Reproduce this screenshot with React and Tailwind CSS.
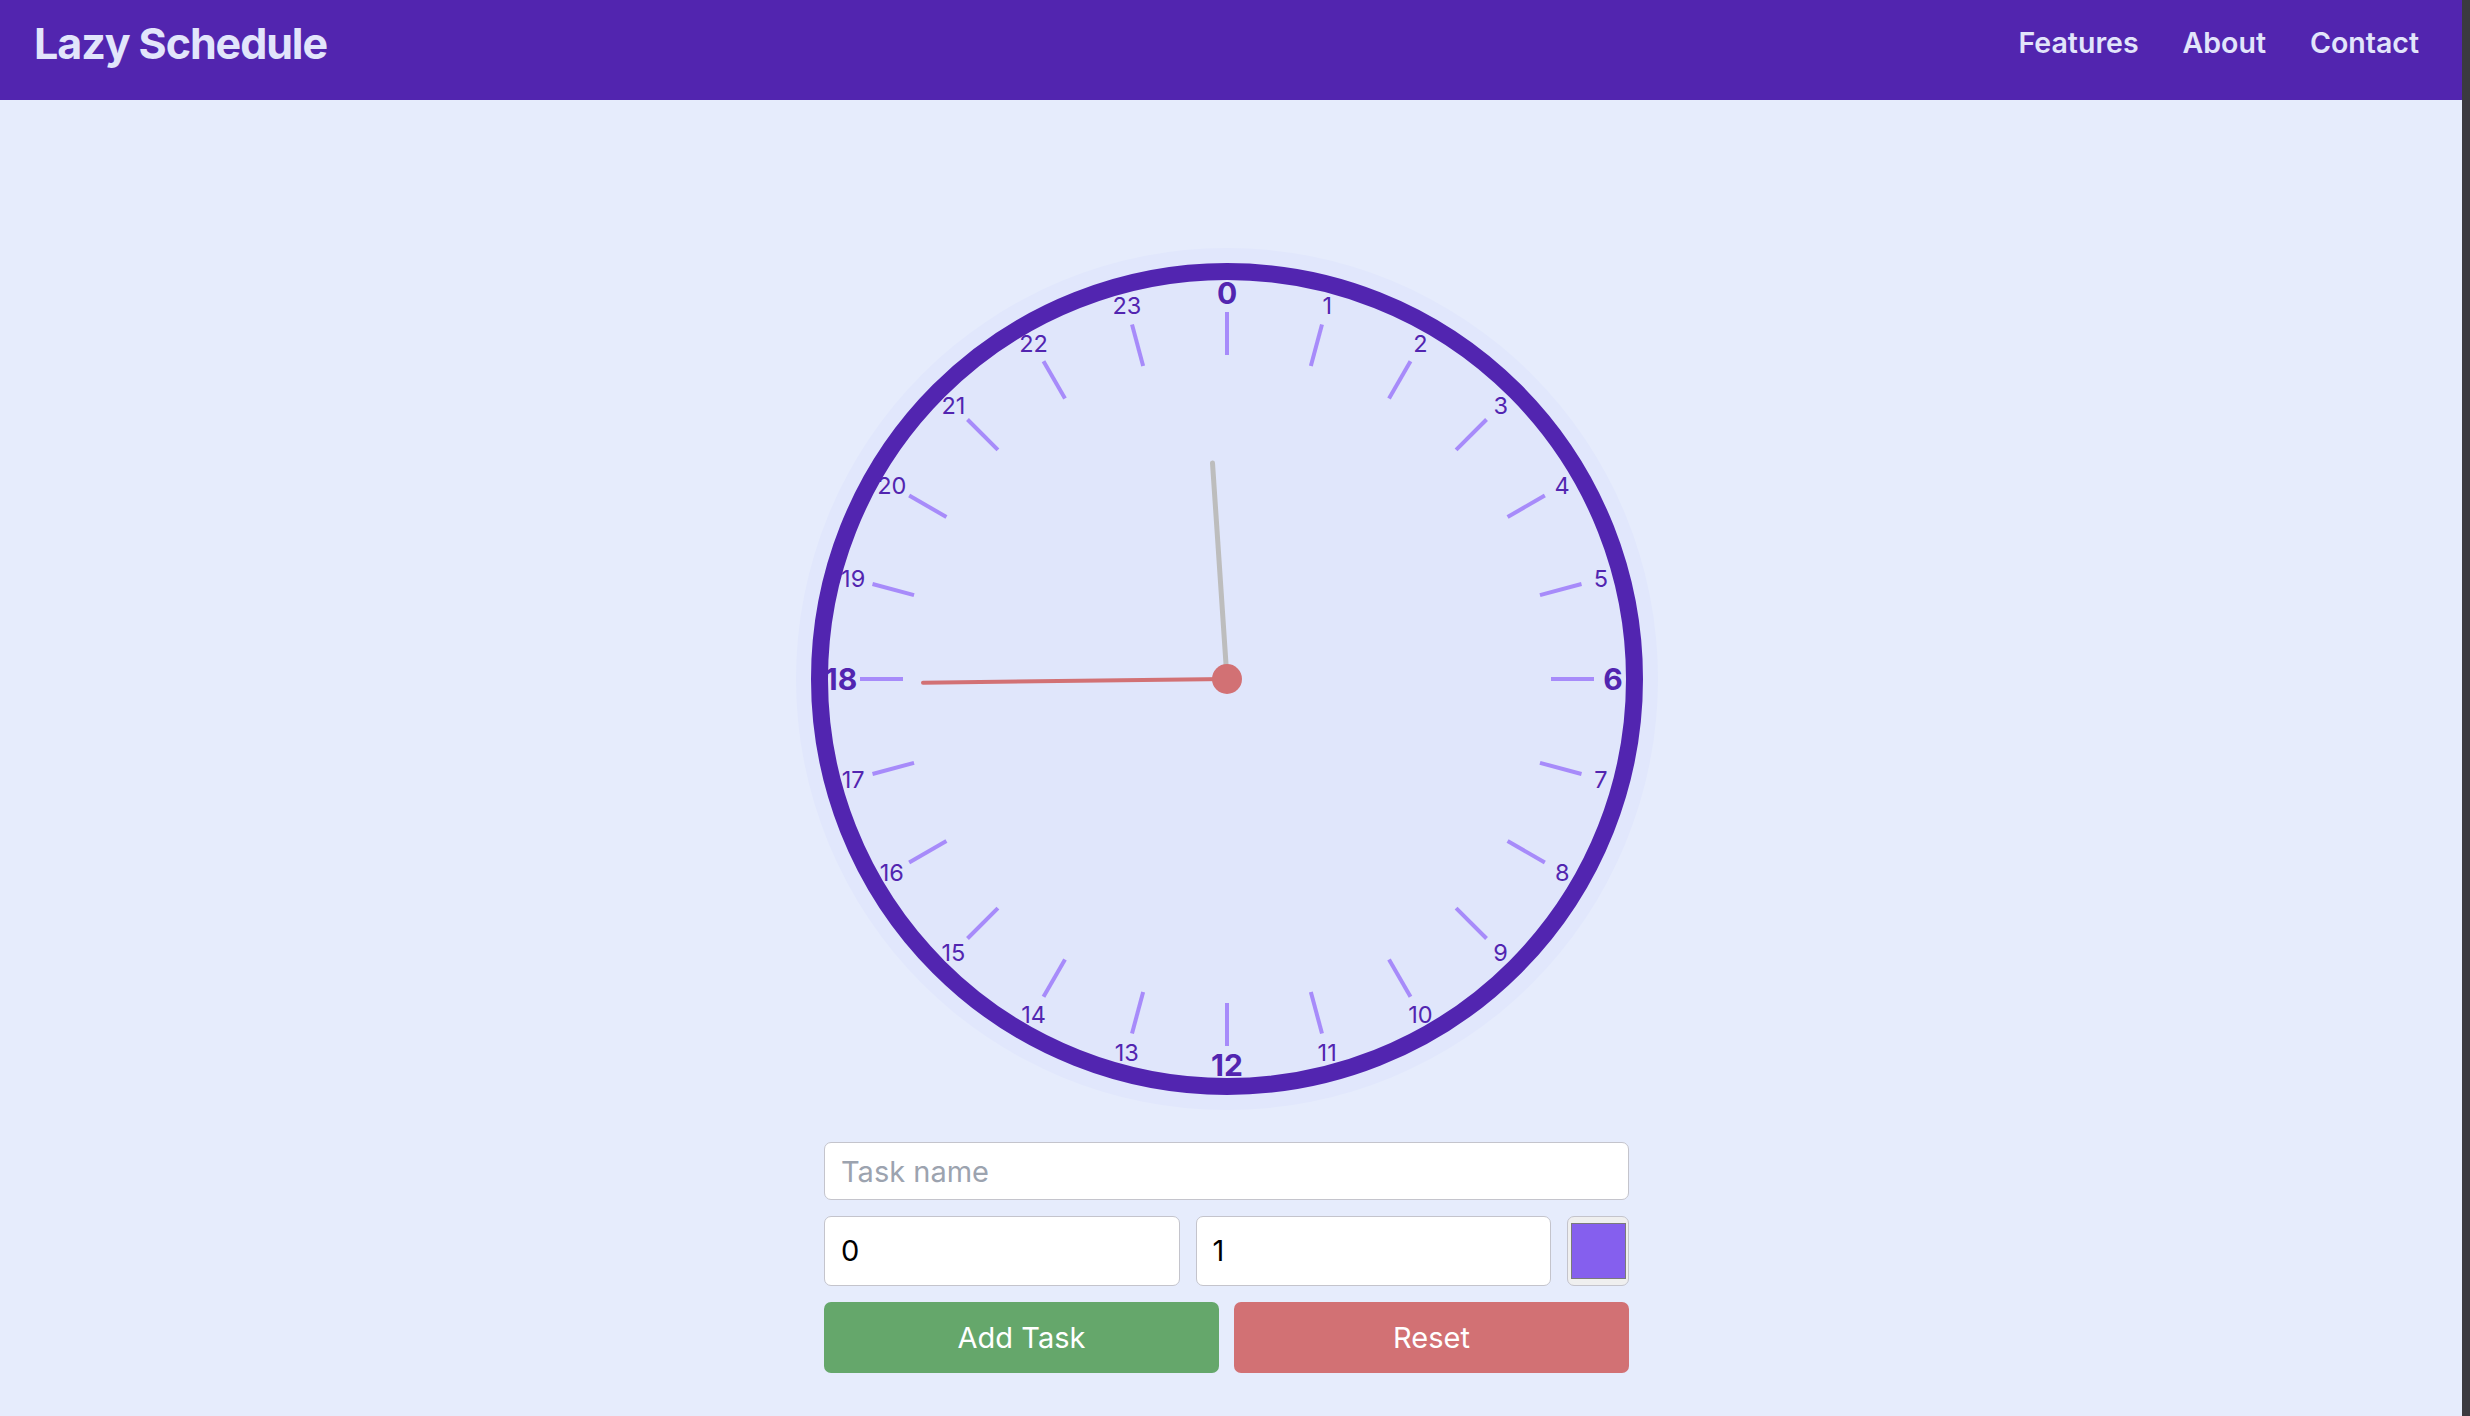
import React, { useState } from 'react'

const C = 440
const hours = Array.from({ length: 24 }, (_, i) => i)

const polar = (deg, r) => {
  const a = (deg * Math.PI) / 180
  return [C + r * Math.sin(a), C - r * Math.cos(a)]
}

const Clock = () => (
  <svg width="880" height="880" viewBox="0 0 880 880" className="block">
    <circle cx={C} cy={C} r="431" fill="#e1e7fc" />
    <circle cx={C} cy={C} r="407.5" fill="#e0e6fb" stroke="#5225b0" strokeWidth="17" />
    {hours.map(h => {
      const [x1, y1] = polar(h * 15, 324)
      const [x2, y2] = polar(h * 15, 367)
      return (
        <line
          key={`t${h}`}
          x1={x1}
          y1={y1}
          x2={x2}
          y2={y2}
          stroke="#a78bfa"
          strokeWidth="4"
        />
      )
    })}
    {hours.map(h => {
      const major = h % 6 === 0
      const [x, y] = polar(h * 15, major ? 386 : 387)
      return (
        <text
          key={`l${h}`}
          x={x}
          y={y}
          textAnchor="middle"
          dominantBaseline="central"
          fill="#5225b0"
          fontFamily="Inter, sans-serif"
          fontSize={major ? 30 : 23.5}
          fontWeight={major ? 700 : 400}
        >
          {h}
        </text>
      )
    })}
    <line x1={C} y1={C} x2={C - 14.5} y2={C - 216} stroke="#bdbdbd" strokeWidth="5" strokeLinecap="round" />
    <line x1={C} y1={C} x2={C - 304} y2={C + 3.7} stroke="#d27174" strokeWidth="4" strokeLinecap="round" />
    <circle cx={C} cy={C} r="15" fill="#d27174" />
  </svg>
)

const App = () => {
  const [name, setName] = useState('')
  const [start, setStart] = useState('0')
  const [end, setEnd] = useState('1')

  return (
    <div className="flex h-[1416px] w-full font-['Inter',sans-serif]">
      <div className="flex flex-1 flex-col bg-[#e6ecfc]">
        <header className="flex h-[100px] items-center justify-between bg-[#5225af] pb-[14px] pl-[34px] pr-[43px] text-[#e2e5fb]">
          <h1 className="text-[43px] font-bold tracking-tight">Lazy Schedule</h1>
          <nav className="flex gap-[44px] text-[28.5px] font-semibold">
            <a href="#">Features</a>
            <a href="#">About</a>
            <a href="#">Contact</a>
          </nav>
        </header>
        <main className="flex flex-col items-center pr-[9px] pt-[139px]">
          <Clock />
          <form
            className="mt-[23px] flex w-[805px] flex-col gap-4"
            onSubmit={e => e.preventDefault()}
          >
            <input
              className="h-[58px] rounded-[7px] border-[1.5px] border-[#c4c4cc] bg-white px-4 text-[29px] text-black outline-none placeholder:text-[#9ca3af]"
              placeholder="Task name"
              value={name}
              onChange={e => setName(e.target.value)}
            />
            <div className="flex h-[70px] gap-4">
              <input
                className="min-w-0 flex-1 rounded-[7px] border-[1.5px] border-[#c4c4cc] bg-white px-4 text-[29px] text-black outline-none"
                value={start}
                onChange={e => setStart(e.target.value)}
              />
              <input
                className="min-w-0 flex-1 rounded-[7px] border-[1.5px] border-[#c4c4cc] bg-white px-4 text-[29px] text-black outline-none"
                value={end}
                onChange={e => setEnd(e.target.value)}
              />
              <div className="flex w-[62px] items-center justify-center rounded-[7px] border-[1.5px] border-[#c4c4cc] bg-[#efefef]">
                <div className="h-[56px] w-[55px] border border-[#7a7a7a] bg-[#855fee]" />
              </div>
            </div>
            <div className="flex h-[71px] gap-[15px]">
              <button type="submit" className="flex-1 rounded-[7px] bg-[#65a76b] text-[29px] text-white">
                Add Task
              </button>
              <button type="button" className="flex-1 rounded-[7px] bg-[#d27174] text-[29px] text-white">
                Reset
              </button>
            </div>
          </form>
        </main>
      </div>
      <div className="w-[8px] bg-[#3b3a3f]" />
    </div>
  )
}

export default App
